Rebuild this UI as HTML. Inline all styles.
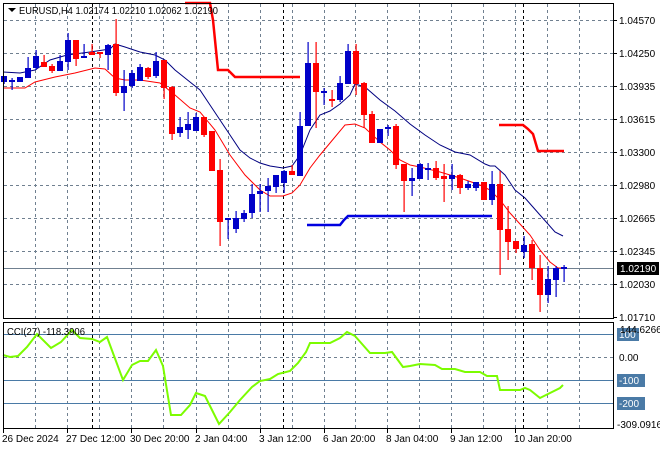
<!DOCTYPE html>
<html><head><meta charset="utf-8"><style>
html,body{margin:0;padding:0;background:#fff;width:660px;height:450px;overflow:hidden}
svg{display:block;font-family:"Liberation Sans",sans-serif}
</style></head><body>
<svg id="s" width="660" height="450" xmlns="http://www.w3.org/2000/svg">
<rect width="660" height="450" fill="#fff"/>
<g id="grid"></g>
<g id="ind"></g>
<g id="cdl"></g>
<rect x="3.5" y="3.5" width="610" height="315" fill="none" stroke="#000"/>
<rect x="3.5" y="322.5" width="610" height="106" fill="none" stroke="#000"/>
<g font-size="10" fill="#000" id="lbl"></g>
<polygon points="8,8 16,8 12,12" fill="#000"/>
<text x="19" y="14" font-size="10.5" textLength="199" lengthAdjust="spacingAndGlyphs">EURUSD,H4  1.02174 1.02210 1.02062 1.02190</text>
<text x="7" y="335" font-size="10.5" textLength="78" lengthAdjust="spacingAndGlyphs">CCI(27) -118.3906</text>
</svg>
<script>
const S=document.getElementById('s'),NS='http://www.w3.org/2000/svg';
function el(p,t,a,txt){const e=document.createElementNS(NS,t);for(const k in a)e.setAttribute(k,a[k]);if(txt!==undefined)e.textContent=txt;document.getElementById(p).appendChild(e);return e;}
const vx=[35,67,99,131,163,196,228,260,292,324,355,387,419,451,483,515,547,579];
vx.forEach(x=>{el('grid','line',{x1:x+.5,y1:4,x2:x+.5,y2:318,stroke:'#708090','stroke-dasharray':'3,3'});el('grid','line',{x1:x+.5,y1:323,x2:x+.5,y2:428,stroke:'#708090','stroke-dasharray':'3,3'});});
[92,283,523].forEach(x=>{el('grid','line',{x1:x+.5,y1:4,x2:x+.5,y2:318,stroke:'#000','stroke-dasharray':'3,3'});el('grid','line',{x1:x+.5,y1:323,x2:x+.5,y2:428,stroke:'#000','stroke-dasharray':'3,3'});});
const hy=[20,53,86,119,152,185,218,251,284];
hy.forEach(y=>el('grid','line',{x1:4,y1:y+.5,x2:613,y2:y+.5,stroke:'#708090','stroke-dasharray':'3,3'}));
el('grid','line',{x1:4,y1:268.5,x2:613,y2:268.5,stroke:'#708090'});
[334,380,403].forEach(y=>el('grid','line',{x1:4,y1:y+.5,x2:613,y2:y+.5,stroke:'#4a7aa6'}));
el('grid','line',{x1:4,y1:357.5,x2:613,y2:357.5,stroke:'#708090','stroke-dasharray':'3,3'});
el('ind','polyline',{fill:'none',stroke:'#000080','stroke-width':1,points:'3,72 20,73 35,70 50,60 67,55 90,52 110,49 115,44 125,47 140,52 155,55 165,60 175,70 190,82 200,90 210,105 220,120 230,135 240,150 250,158 260,163 270,166 283,168 292,166 300,155 310,130 320,115 330,111 340,104 350,95 355,84 365,87 380,100 395,111 410,124 425,135 440,145 455,152 470,155 485,164 490,166 495,166 505,175 515,190 525,198 540,215 555,232 563,236'});
el('ind','polyline',{fill:'none',stroke:'#f00','stroke-width':1,points:'3,88 25,88 35,82 55,77 75,73 95,68 105,69 115,78 125,80 140,80 160,83 175,95 190,108 200,112 215,130 230,155 245,175 260,190 270,196 283,196 292,193 300,185 310,168 320,155 330,143 345,125 355,124 365,128 380,142 390,150 400,160 410,165 420,167 440,172 460,178 480,185 490,190 500,200 510,213 520,224 530,235 540,250 550,262 558,268 563,268'});
el('ind','polyline',{fill:'none',stroke:'#f00','stroke-width':2.5,points:'185,3 210,3 213,20 218,70 228,70 235,77 300,77'});
el('ind','polyline',{fill:'none',stroke:'#f00','stroke-width':2.5,points:'499,125 523,125 528,129 533,134 538,151 564,151'});
el('ind','polyline',{fill:'none',stroke:'#0000e0','stroke-width':2.5,points:'307,225 340,225 344,220 348,216 492,216'});
el('ind','polyline',{fill:'none',stroke:'#7cfc00','stroke-width':2,points:'3,355 10,357 18,356 27,347 37,334 51,348 61,342 72,330 80,338 92,339 100,342 107,337 123,380 132,365 140,361 148,361 156,350 163,366 171,415 181,415 190,405 196,393 205,396 219,424 230,412 240,400 252,387 260,381 270,379 278,374 290,371 298,363 306,352 310,343 325,343 330,343 340,338 347,332 355,336 370,353 385,353 392,352 403,367 410,366 420,364 435,365 442,369 455,369 465,372 480,372 487,376 497,376 500,390 520,390 525,388 530,390 540,398 548,394 560,388 563,385'});
const C=[[1,76,82,76,84],[1,80,82,78,90],[1,77,82,77,82],[1,68,78,57,78],[1,56,68,50,70],[0,62,67,55,67],[0,66,71,64,73],[1,61,71,55,71],[1,40,62,33,70],[0,40,59,40,66],[1,56,58,44,58],[0,52,55,44,55],[0,52,54,52,58],[1,45,55,44,70],[0,44,93,19,96],[1,86,93,70,111],[1,73,86,70,88],[1,67,81,64,81],[0,68,77,67,79],[1,61,76,52,78],[0,60,88,60,99],[0,87,134,86,140],[1,127,133,117,137],[1,124,130,112,139],[1,117,131,113,131],[0,117,135,117,137],[0,131,171,131,171],[0,170,222,159,246],[1,218,220,218,239],[1,218,229,211,233],[1,213,219,210,222],[1,194,213,184,218],[1,191,194,184,212],[1,186,191,178,212],[1,175,187,175,193],[1,171,183,170,193],[0,171,175,165,175],[1,126,176,112,176],[1,63,126,42,126],[0,63,92,42,128],[1,91,93,88,105],[0,99,101,90,107],[1,83,100,76,102],[1,51,84,44,84],[0,51,84,44,95],[0,83,115,82,128],[0,114,143,111,143],[1,129,143,129,143],[1,127,129,125,136],[0,126,165,124,169],[0,164,181,164,212],[1,178,181,168,196],[1,164,179,163,179],[1,168,170,163,180],[0,168,178,161,180],[0,176,179,164,202],[1,175,179,164,190],[0,175,188,174,194],[1,184,188,181,190],[1,182,188,182,191],[0,182,200,182,200],[1,184,200,171,205],[0,184,230,171,275],[0,229,242,206,260],[0,241,249,241,253],[1,245,252,236,258],[0,244,268,240,280],[0,268,295,255,312],[1,279,295,266,303],[1,268,280,266,297],[1,267,269,265,282]];
C.forEach((c,i)=>{const x=3+8*i+1,col=c[0]?'#0000c8':'#ff0000';
el('cdl','rect',{x:x-0.5,y:c[3],width:1.2,height:Math.max(1,c[4]-c[3]),fill:col});
el('cdl','rect',{x:x-3,y:c[1],width:6,height:Math.max(2,c[2]-c[1]),fill:col});});
const pl=[['1.04570',20],['1.04250',53],['1.03935',86],['1.03615',119],['1.03300',152],['1.02980',185],['1.02665',218],['1.02345',251],['1.02030',284],['1.01710',317]];
pl.forEach(p=>{el('lbl','line',{x1:614,y1:p[1]+.5,x2:617,y2:p[1]+.5,stroke:'#000'});el('lbl','text',{x:619,y:p[1]+4},p[0]);});
el('lbl','rect',{x:617,y:262,width:42,height:13,fill:'#000'});
el('lbl','text',{x:620,y:272,fill:'#fff'},'1.02190');
[['100',334],['-100',380],['-200',403]].forEach(p=>{el('lbl','rect',{x:617,y:p[1]-6,width:p[0].length*6+4,height:13,fill:'#4a7aa6'});el('lbl','text',{x:619,y:p[1]+4,fill:'#fff'},p[0]);});
el('lbl','text',{x:619,y:361},'0.00');
el('lbl','text',{x:620,y:333},'144.6266');
el('lbl','text',{x:617,y:428},'-309.0916');
[['26 Dec 2024',3],['27 Dec 12:00',67],['30 Dec 20:00',131],['2 Jan 04:00',196],['3 Jan 12:00',260],['6 Jan 20:00',324],['8 Jan 04:00',387],['9 Jan 12:00',451],['10 Jan 20:00',515]].forEach(p=>{el('lbl','line',{x1:p[1]+.5,y1:429,x2:p[1]+.5,y2:433,stroke:'#000'});el('lbl','text',{x:p[1]-1,y:442},p[0]);});
</script>
</body></html>
